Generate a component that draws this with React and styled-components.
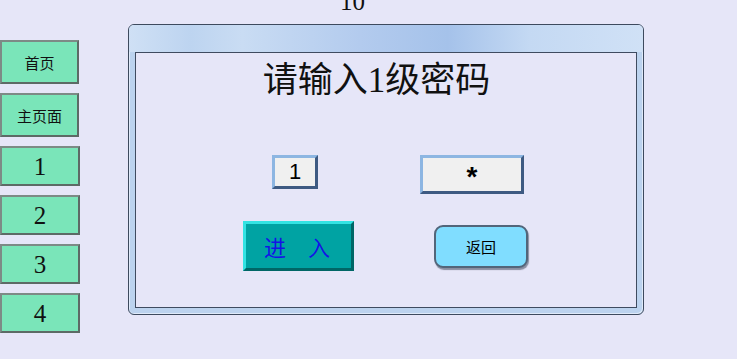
import React from 'react';
import styled, { createGlobalStyle } from 'styled-components';

const GlobalStyle = createGlobalStyle`
	html, body {
		margin: 0;
		padding: 0;
		background: #e6e6f8;
		overflow: hidden;
	}
	body {
		font-family: "Noto Sans CJK SC", sans-serif;
	}
`;

const navItems = [
	{ label: '首页', tall: true },
	{ label: '主页面', tall: true },
	{ label: '1' },
	{ label: '2' },
	{ label: '3' },
	{ label: '4' },
];

const App = () => {
	return (
		<Page>
			<GlobalStyle />
			<Nav>
				{navItems.map((item) => (
					<NavButton key={item.label} $tall={item.tall}>
						{item.label}
					</NavButton>
				))}
			</Nav>
			<Main>
				<PageNumber>10</PageNumber>
				<Window>
					<TitleBar />
					<Client>
						<Heading>请输入1级密码</Heading>
						<Row $align="flex-start" $top={54}>
							<Cell>
								<Field $w={46} $h={34} $dx={-2}>
									<FieldText>1</FieldText>
								</Field>
							</Cell>
							<Cell>
								<Field $w={104} $h={39} $dx={-5}>
									<Star>*</Star>
								</Field>
							</Cell>
						</Row>
						<Row $align="center" $top={27}>
							<Cell>
								<EnterButton>进　入</EnterButton>
							</Cell>
							<Cell>
								<BackButton>返回</BackButton>
							</Cell>
						</Row>
					</Client>
				</Window>
			</Main>
		</Page>
	);
};

const Page = styled.div`
	display: flex;
	align-items: flex-start;
	width: 737px;
	height: 359px;
`;
const Nav = styled.div`
	display: flex;
	flex-direction: column;
	gap: 9px;
	margin-top: 40px;
	width: 80px;
`;
const NavButton = styled.div`
	box-sizing: border-box;
	width: ${(p) => (p.$tall ? '79px' : '80px')};
	height: ${(p) => (p.$tall ? '44px' : '40px')};
	display: flex;
	align-items: center;
	justify-content: center;
	background: #7ae5b9;
	border: 2px solid #7d8a86;
	border-right-color: #5d6a66;
	border-bottom-color: #5d6a66;
	color: #111;
	font-family: ${(p) =>
		p.$tall ? '"Noto Sans CJK SC", sans-serif' : '"Liberation Serif", serif'};
	font-size: ${(p) => (p.$tall ? '15px' : '25px')};
	line-height: 1;
`;
const Main = styled.div`
	display: flex;
	flex-direction: column;
	margin-left: 48px;
`;
const PageNumber = styled.div`
	height: 32px;
	margin-top: -8px;
	padding-left: 212px;
	font-family: "Liberation Serif", serif;
	font-size: 25px;
	line-height: 20px;
	color: #111;
`;
const Window = styled.div`
	box-sizing: border-box;
	width: 516px;
	height: 291px;
	display: flex;
	flex-direction: column;
	padding: 0 6px 6px;
	border: 1px solid #3d4a5e;
	border-radius: 6px;
	background: #bcd3ef;
	box-shadow: inset 1px 1px 0 #dfeafa, inset -1px -1px 0 #dfeafa;
`;
const TitleBar = styled.div`
	height: 27px;
	margin: 0 -6px;
	border-radius: 5px 5px 0 0;
	background: linear-gradient(
		90deg,
		#cfe0f5 0%,
		#bdd4f0 12%,
		#c9dcf3 22%,
		#b3cbee 45%,
		#a5c2ea 62%,
		#c4d9f3 78%,
		#d0e1f6 100%
	);
`;
const Client = styled.div`
	flex: 1;
	display: flex;
	flex-direction: column;
	padding-top: 8px;
	background: #e6e6f8;
	border: 1px solid #3f4b60;
`;
const Heading = styled.div`
	height: 40px;
	padding-right: 19px;
	text-align: center;
	font-family: "Liberation Serif", "Noto Sans CJK SC", serif;
	font-size: 35px;
	line-height: 40px;
	color: #111;
`;
const Row = styled.div`
	display: grid;
	grid-template-columns: 180px 180px;
	align-items: ${(p) => p.$align};
	margin-top: ${(p) => p.$top}px;
	padding-left: 71px;
`;
const Cell = styled.div`
	display: flex;
	justify-content: center;
`;
const Field = styled.div`
	box-sizing: border-box;
	width: ${(p) => p.$w}px;
	height: ${(p) => p.$h}px;
	display: flex;
	align-items: center;
	justify-content: center;
	margin-right: ${(p) => -2 * p.$dx}px;
	background: #f0f0f0;
	border: 3px solid #8db6e2;
	border-right-color: #3e5a82;
	border-bottom-color: #3e5a82;
`;
const FieldText = styled.span`
	font-family: "Liberation Sans", sans-serif;
	font-size: 22px;
	line-height: 1;
	color: #000;
`;
const Star = styled.span`
	font-family: "Liberation Sans", sans-serif;
	font-size: 28px;
	font-weight: bold;
	line-height: 1;
	margin-top: 4px;
	color: #000;
`;
const EnterButton = styled.div`
	box-sizing: border-box;
	width: 111px;
	height: 50px;
	display: flex;
	align-items: center;
	justify-content: center;
	margin-left: 2px;
	background: #00a3a3;
	border: 3px solid #33e3e3;
	border-right-color: #006666;
	border-bottom-color: #006666;
	color: #1414e6;
	font-family: "Noto Sans CJK SC", sans-serif;
	font-size: 22px;
	line-height: 1;
	padding-right: 2px;
`;
const BackButton = styled.div`
	box-sizing: border-box;
	width: 94px;
	height: 43px;
	display: flex;
	align-items: center;
	justify-content: center;
	background: #80ddff;
	border: 2px solid #52657a;
	border-radius: 9px;
	box-shadow: 1px 2px 1px rgba(60, 70, 90, 0.55);
	color: #000;
	font-family: "Noto Sans CJK SC", sans-serif;
	font-size: 15px;
	line-height: 1;
	margin-left: 8px;
`;

export default App;
